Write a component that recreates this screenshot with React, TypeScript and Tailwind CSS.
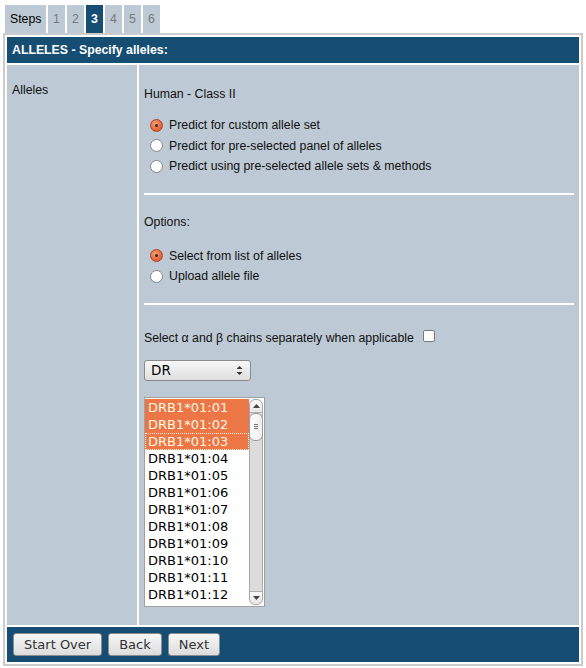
import React from "react";

const Radio = ({ checked }: { checked?: boolean }) =>
  checked ? (
    <span className="relative inline-block w-[13px] h-[13px] rounded-full border border-[#a8461f] bg-[radial-gradient(circle_at_40%_35%,#f8a078,#e8673a_60%,#d0552a)] shrink-0">
      <span className="absolute left-[4px] top-[4px] w-[3px] h-[3px] rounded-full bg-[#2a2a2a]" />
    </span>
  ) : (
    <span className="inline-block w-[13px] h-[13px] rounded-full border border-[#8a8a8a] bg-[radial-gradient(circle_at_50%_40%,#ffffff,#ffffff_55%,#e4e4e4)] shrink-0" />
  );

const RadioRow = ({ checked, label }: { checked?: boolean; label: string }) => (
  <div className="flex items-center h-[20.5px] ml-[6px] gap-[6px]">
    <Radio checked={checked} />
    <span>{label}</span>
  </div>
);

const items = [
  "DRB1*01:01",
  "DRB1*01:02",
  "DRB1*01:03",
  "DRB1*01:04",
  "DRB1*01:05",
  "DRB1*01:06",
  "DRB1*01:07",
  "DRB1*01:08",
  "DRB1*01:09",
  "DRB1*01:10",
  "DRB1*01:11",
  "DRB1*01:12",
];

const Btn = ({ label }: { label: string }) => (
  <button className="h-[23px] px-[10px] rounded-[3px] border border-[#8c8c8c] bg-[linear-gradient(#f7f7f7,#dcdcdc)] text-[13px] leading-[21px] text-[#333] font-['DejaVu_Sans',sans-serif]">
    {label}
  </button>
);

export default function App() {
  return (
    <div className="bg-white w-[586px] h-[668px] text-[12.3px] text-[#111] font-['Liberation_Sans',Arial,sans-serif]">
      <div className="flex gap-[2px] pl-[5px] pt-[5px]">
        <div className="w-[41px] h-[28px] bg-[#bdc9d4] flex items-center pl-[5px] text-black">Steps</div>
        {["1", "2", "3", "4", "5", "6"].map((n) => (
          <div
            key={n}
            className={
              n === "3"
                ? "w-[17px] h-[28px] bg-[#164e73] flex items-center justify-center text-white font-bold"
                : "w-[17px] h-[28px] bg-[#bdc9d4] flex items-center justify-center text-[#7a7a7a]"
            }
          >
            {n}
          </div>
        ))}
      </div>
      <div className="ml-[3px] w-[580px] border-2 border-[#cccccc] bg-white p-[2px] flex flex-col gap-[2px]">
        <div className="h-[26px] bg-[#164e73] text-white font-bold flex items-center pl-[5px]">
          ALLELES - Specify alleles:
        </div>
        <div className="flex gap-[2px]">
          <div className="w-[130px] bg-[#bdc9d4] pl-[5px] pt-[17px] leading-[16px]">Alleles</div>
          <div className="flex-1 bg-[#bdc9d4] px-[5px] pt-[21px] pb-[18px]">
            <div className="leading-[16px]">Human - Class II</div>
            <div className="mt-[13px]">
              <RadioRow checked label="Predict for custom allele set" />
              <RadioRow label="Predict for pre-selected panel of alleles" />
              <RadioRow label="Predict using pre-selected allele sets & methods" />
            </div>
            <div className="mt-[16px] h-[2px] bg-white" />
            <div className="mt-[19px] leading-[16px]">Options:</div>
            <div className="mt-[16px]">
              <RadioRow checked label="Select from list of alleles" />
              <RadioRow label="Upload allele file" />
            </div>
            <div className="mt-[16px] h-[2px] bg-white" />
            <div className="mt-[25px] flex items-center leading-[16px]">
              <span>Select α and β chains separately when applicable</span>
              <span className="ml-[9px] -mt-[3px] inline-block w-[12px] h-[12px] rounded-[2px] border border-[#7a7a7a] bg-white" />
            </div>
            <div className="mt-[14px] w-[107px] h-[21px] rounded-[3px] border border-[#8a8a8a] bg-[linear-gradient(#f8f8f8,#dedede)] flex items-center justify-between pl-[6px] pr-[7px] text-[13.5px] font-['DejaVu_Sans',sans-serif] text-black">
              <span>DR</span>
              <svg width="7" height="11" viewBox="0 0 7 11">
                <path d="M0.5 4 L3.5 1 L6.5 4 Z" fill="#333" />
                <path d="M0.5 7 L3.5 10 L6.5 7 Z" fill="#333" />
              </svg>
            </div>
            <div className="mt-[16px] w-[121px] h-[210px] border border-[#a0a0a0] bg-white flex">
              <div className="flex-1 pt-[1px] text-[13px] leading-[17px] font-['DejaVu_Sans',sans-serif]">
                {items.map((it, i) => (
                  <div
                    key={it}
                    className={
                      i < 2
                        ? "h-[17px] pl-[3px] bg-[#ec7646] text-[#fff6e2]"
                        : i === 2
                        ? "h-[17px] pl-[2px] bg-[#ec7646] text-[#fff6e2] border border-dotted border-[#fff6e2] leading-[15px]"
                        : "h-[17px] pl-[3px] text-black"
                    }
                  >
                    {it}
                  </div>
                ))}
              </div>
              <div className="w-[14px] my-[1px] mr-[1px] rounded-[6px] border border-[#a8a8a8] bg-[#dcdcdc] flex flex-col">
                <div className="h-[13px] rounded-t-[6px] bg-[linear-gradient(#fafafa,#e6e6e6)] border-b border-[#b0b0b0] flex items-center justify-center">
                  <svg width="7" height="4" viewBox="0 0 7 4">
                    <path d="M0 4 L3.5 0 L7 4 Z" fill="#444" />
                  </svg>
                </div>
                <div className="h-[28px] mx-[-1px] rounded-[6px] border border-[#9a9a9a] bg-[linear-gradient(90deg,#ffffff,#ececec)] flex flex-col items-center justify-center gap-[1px]">
                  <span className="block w-[4px] h-[1px] bg-[#777]" />
                  <span className="block w-[4px] h-[1px] bg-[#777]" />
                  <span className="block w-[4px] h-[1px] bg-[#777]" />
                </div>
                <div className="flex-1" />
                <div className="h-[13px] rounded-b-[6px] bg-[linear-gradient(#fafafa,#e6e6e6)] border-t border-[#b0b0b0] flex items-center justify-center">
                  <svg width="7" height="4" viewBox="0 0 7 4">
                    <path d="M0 0 L3.5 4 L7 0 Z" fill="#444" />
                  </svg>
                </div>
              </div>
            </div>
          </div>
        </div>
        <div className="h-[35px] bg-[#164e73] flex items-start gap-[6px] pl-[6px] pt-[6px]">
          <Btn label="Start Over" />
          <Btn label="Back" />
          <Btn label="Next" />
        </div>
      </div>
    </div>
  );
}
